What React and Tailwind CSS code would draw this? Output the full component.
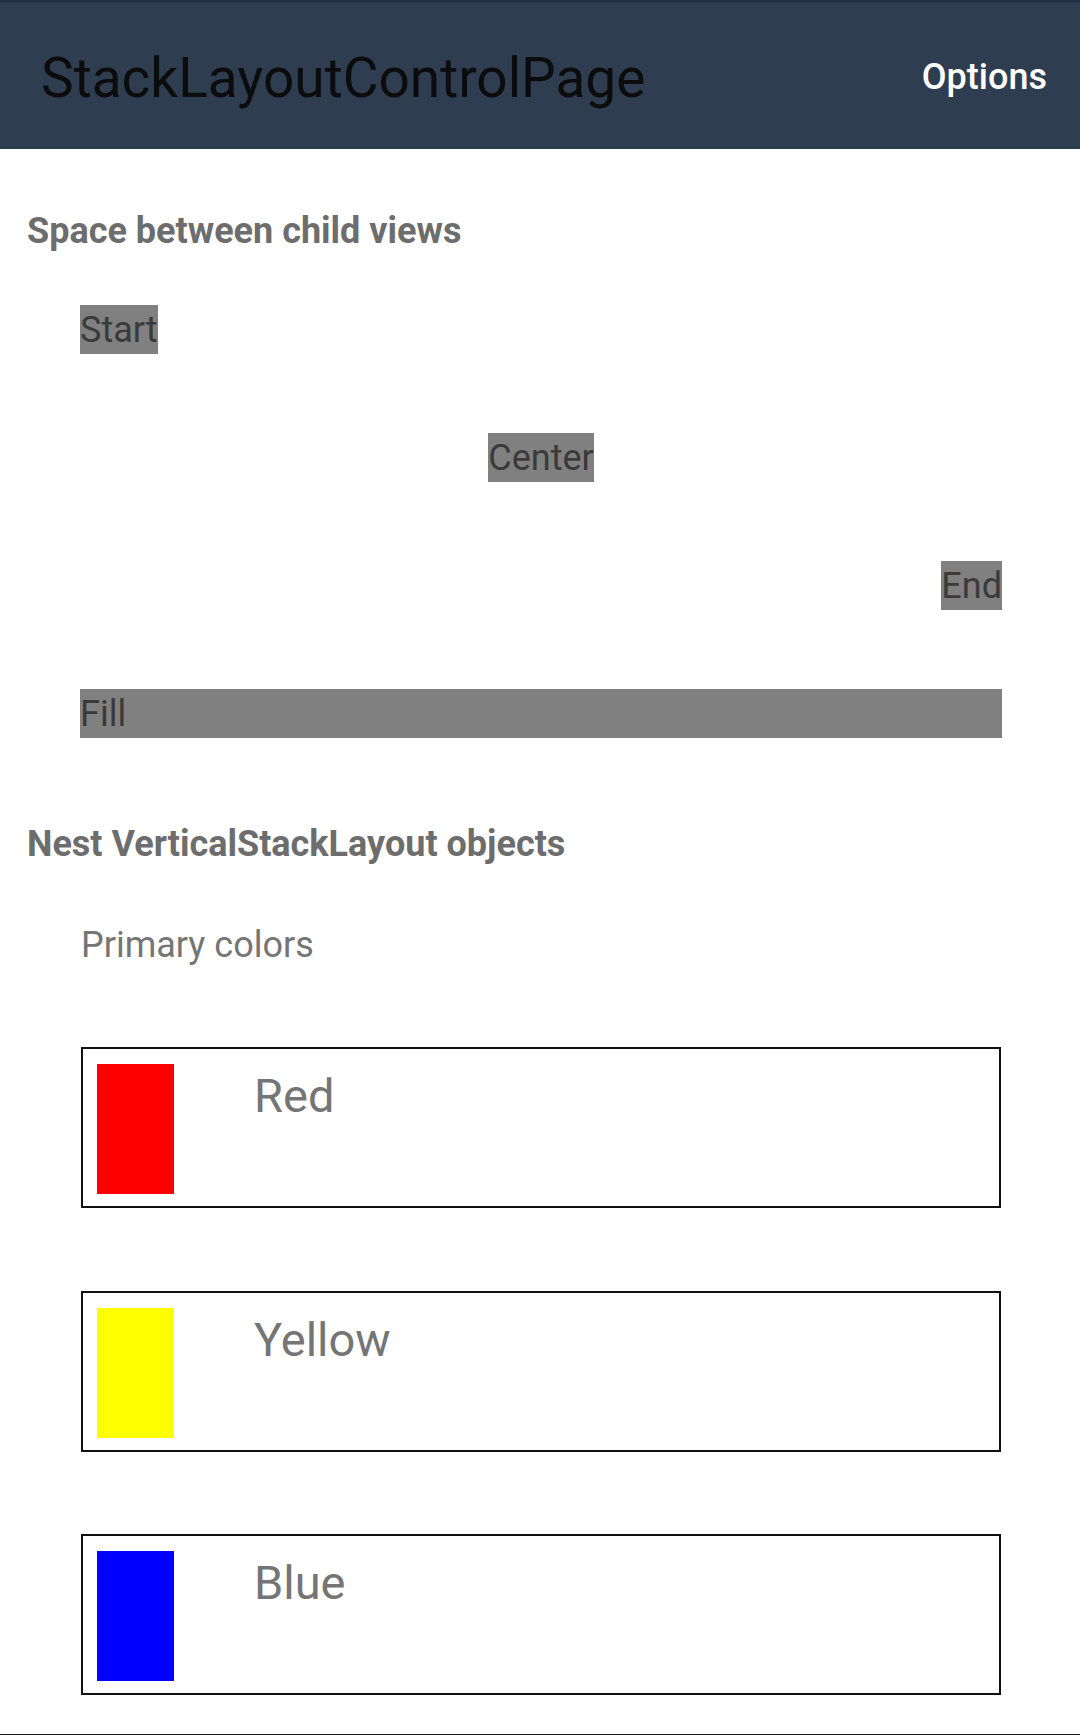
import React from 'react';

const alignments = [
  { label: 'Start', cls: 'self-start' },
  { label: 'Center', cls: 'self-center' },
  { label: 'End', cls: 'self-end' },
  { label: 'Fill', cls: 'self-stretch' },
];

const colors = [
  { name: 'Red', swatch: 'bg-[#ff0000]' },
  { name: 'Yellow', swatch: 'bg-[#ffff00]' },
  { name: 'Blue', swatch: 'bg-[#0000ff]' },
];

const ColorRow = ({ name, swatch }) => (
  <div className="flex items-start h-[161px] border-2 border-[#111] pl-[14px] pt-[15px]">
    <div className={`w-[77px] h-[130px] ${swatch}`}></div>
    <span className="ml-[80px] mt-[4px] text-[47px] leading-[56px] text-[#757575]">{name}</span>
  </div>
);

const App = () => {
  return (
    <div className="flex flex-col h-[1735px] bg-white font-['Roboto',sans-serif]">
      <header className="flex items-center justify-between h-[149px] border-t-[3px] border-[#1f3449] bg-[#2e3e50] pl-[41px] pr-[33px]">
        <h1 className="mt-[4px] text-[55px] leading-[61px] text-[#0c0c0c]">StackLayoutControlPage</h1>
        <span className="mt-[1px] text-[36px] leading-[40px] font-medium text-white">Options</span>
      </header>

      <main className="flex flex-col pt-[62px]">
        <h2 className="pl-[27px] text-[36px] leading-[40px] font-bold text-[#6d6d6d]">Space between child views</h2>
        <div className="flex flex-col gap-[79px] mt-[54px] pl-[80px] pr-[78px]">
          {alignments.map((a) => (
            <div
              key={a.label}
              className={`${a.cls} h-[49px] pt-[2px] bg-[#808080] text-[36px] leading-[47px] text-[#3a3a3a]`}
            >
              {a.label}
            </div>
          ))}
        </div>

        <h2 className="mt-[86px] pl-[27px] text-[36px] leading-[40px] font-bold text-[#6d6d6d]">Nest VerticalStackLayout objects</h2>
        <div className="flex flex-col mt-[61px] pl-[81px] pr-[79px]">
          <p className="text-[36px] leading-[40px] text-[#757575]">Primary colors</p>
          <div className="flex flex-col gap-[82.5px] mt-[82px]">
            {colors.map((c) => (
              <ColorRow key={c.name} {...c} />
            ))}
          </div>
        </div>
      </main>

      <div className="mt-auto h-px bg-[#1a1a1a]"></div>
    </div>
  );
};

export default App;
